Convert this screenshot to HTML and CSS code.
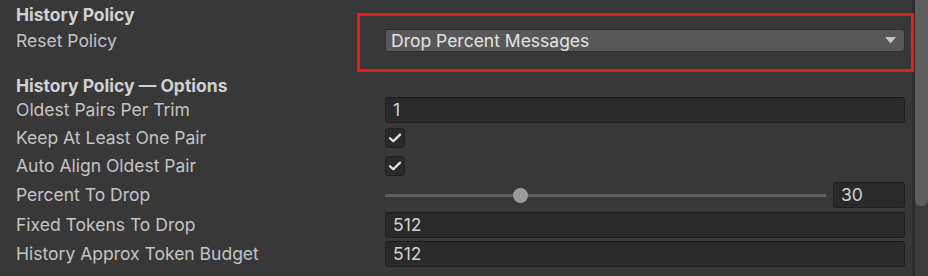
FILE: index.html
```html
<!DOCTYPE html>
<html>
<head>
<meta charset="utf-8">
<link rel="stylesheet" href="styles.css">
</head>
<body>
<div class="window">
  <div class="content">
    <div class="header">History Policy</div>
    <div class="row row-reset">
      <div class="label">Reset Policy</div>
      <div class="control">
        <div class="dropdown">
          <span class="dd-text">Drop Percent Messages</span>
          <svg class="dd-arrow" width="11" height="7" viewBox="0 0 11 7"><path d="M0 0 H11 L5.5 6.5 Z" fill="#c4c4c4"/></svg>
        </div>
        <div class="highlight"></div>
      </div>
    </div>
    <div class="header header2">History Policy — Options</div>
    <div class="row h28">
      <div class="label">Oldest Pairs Per Trim</div>
      <div class="control"><div class="field">1</div></div>
    </div>
    <div class="row h28">
      <div class="label">Keep At Least One Pair</div>
      <div class="control"><div class="check"><svg width="14" height="12" viewBox="0 0 14 12"><path d="M2 6.2 L5.3 9.3 L12 2.6" fill="none" stroke="#e6e6e6" stroke-width="2.2" stroke-linecap="round" stroke-linejoin="round"/></svg></div></div>
    </div>
    <div class="row h28">
      <div class="label">Auto Align Oldest Pair</div>
      <div class="control"><div class="check"><svg width="14" height="12" viewBox="0 0 14 12"><path d="M2 6.2 L5.3 9.3 L12 2.6" fill="none" stroke="#e6e6e6" stroke-width="2.2" stroke-linecap="round" stroke-linejoin="round"/></svg></div></div>
    </div>
    <div class="row h30">
      <div class="label">Percent To Drop</div>
      <div class="control slider-control">
        <div class="slider">
          <div class="track"></div>
          <div class="knob" style="left: 29.5%"></div>
        </div>
        <div class="field num">30</div>
      </div>
    </div>
    <div class="row h29">
      <div class="label">Fixed Tokens To Drop</div>
      <div class="control"><div class="field">512</div></div>
    </div>
    <div class="row h29">
      <div class="label">History Approx Token Budget</div>
      <div class="control"><div class="field">512</div></div>
    </div>
  </div>
  <div class="scrollbar"><div class="thumb"></div></div>
</div>
</body>
</html>
```
FILE: styles.css
```css
html, body {
  margin: 0;
  padding: 0;
  background: #383838;
}
body {
  font-family: Inter, "Noto Sans", sans-serif;
  font-size: 17.5px;
  color: #c4c4c4;
  width: 928px;
  height: 276px;
  overflow: hidden;
}
.window {
  display: flex;
  height: 276px;
}
.content {
  flex: 1;
  padding: 5px 7px 0 16px;
}
.header {
  font-weight: 700;
  line-height: 20px;
  color: #d0d0d0;
}
.header2 {
  margin-top: 23px;
}
.row {
  display: grid;
  grid-template-columns: 369px 1fr;
  align-items: center;
  line-height: 20px;
}
.row-reset {
  margin-top: 3px;
  height: 25px;
}
.h28 { height: 28px; }
.h29 { height: 29px; }
.h30 { height: 30px; }
.label {
  white-space: nowrap;
}
.control {
  position: relative;
  display: flex;
  align-items: center;
}
.dropdown {
  flex: 1;
  height: 23px;
  box-sizing: border-box;
  background: #585858;
  border: 1px solid #303030;
  border-top-color: #2a2a2a;
  border-radius: 3px;
  display: flex;
  align-items: center;
  justify-content: space-between;
  padding: 0 8px 0 5px;
  color: #e2e2e2;
}
.dd-arrow {
  display: block;
}
.highlight {
  position: absolute;
  left: -28px;
  right: -9px;
  top: -16px;
  bottom: -20px;
  border: 3px solid #e41d1d;
}
.field {
  flex: 1;
  height: 26px;
  box-sizing: border-box;
  background: #2a2a2a;
  border: 1px solid #202020;
  border-top-color: #1b1b1b;
  border-radius: 3px;
  padding: 0 7px;
  display: flex;
  align-items: center;
  color: #d2d2d2;
}
.check {
  width: 20px;
  height: 20px;
  box-sizing: border-box;
  background: #2a2a2a;
  border: 1px solid #202020;
  border-radius: 3px;
  display: flex;
  align-items: center;
  justify-content: center;
}
.check svg { display: block; }
.slider-control {
  gap: 7px;
}
.slider {
  position: relative;
  flex: 1;
  height: 26px;
  margin: 0 7px 0 0;
}
.slider .track {
  position: absolute;
  left: 0;
  right: -7px;
  top: 12px;
  height: 3px;
  background: #5e5e5e;
}
.knob {
  position: absolute;
  top: 6px;
  width: 15px;
  height: 15px;
  border-radius: 50%;
  background: #9c9c9c;
}
.field.num {
  flex: 0 0 72px;
}
.scrollbar {
  width: 13px;
  border-left: 3px solid #2d2d2d;
  background: #3c3c3c;
  height: 276px;
}
.thumb {
  height: 206px;
  background: #5e5e5e;
  border-radius: 0 0 6px 6px;
}
```
